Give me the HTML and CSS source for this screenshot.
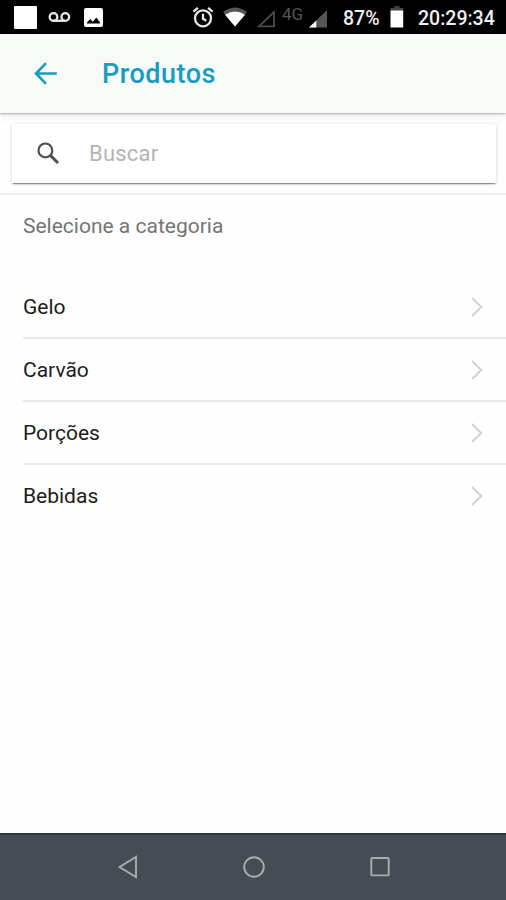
FILE: index.html
```html
<!DOCTYPE html>
<html lang="pt-BR">
<head>
  <meta charset="UTF-8">
  <meta name="viewport" content="width=device-width, initial-scale=1.0">
  <title>Produtos</title>
  <link rel="stylesheet" href="styles.css">
</head>
<body>
  <div class="status-bar">
    <div class="notifications">
      <div class="app-square"></div>
      <svg class="voicemail" width="23" height="11" viewBox="0 0 23 11" fill="none" stroke="#e8e8e8" stroke-width="2.3">
        <circle cx="5.5" cy="5" r="3.8"/>
        <circle cx="17.3" cy="5" r="3.8"/>
        <path d="M5.5 8.8H17.3"/>
      </svg>
      <svg class="picture" width="19" height="19" viewBox="0 0 19 19">
        <rect width="19" height="19" rx="2" fill="#fff"/>
        <path d="M3 15.5V14.5L6.3 11L8.7 13.8L12.4 9.5L16 14.5V15.5Z" fill="#000"/>
      </svg>
    </div>
    <div class="system">
      <svg class="alarm" width="22" height="22" viewBox="0 0 22 22" fill="none" stroke="#e8e8e8" stroke-width="2.3">
        <circle cx="11" cy="12.3" r="8"/>
        <path d="M1.4 5.6L5.9 1.8M20.6 5.6L16.1 1.8M11 7.8V12.8L14.3 14.8"/>
      </svg>
      <svg class="wifi" width="26" height="20" viewBox="0 0 26 20">
        <path d="M1 5Q13 -4 25 5L13 19.5Z" fill="#555"/>
        <path d="M3 7.8Q13 1 23 7.8L13 19.5Z" fill="#fff"/>
      </svg>
      <svg class="signal-empty" width="19" height="18" viewBox="0 0 19 18" fill="none" stroke="#4c4c4c" stroke-width="1.8">
        <path d="M2 16.3H17V2Z"/>
      </svg>
      <span class="network">4G</span>
      <svg class="signal" width="19" height="18" viewBox="0 0 19 18">
        <path d="M0 17.5L18 0V17.5Z" fill="#555"/>
        <path d="M0 17.5L7.3 10.5V17.5Z" fill="#fff"/>
      </svg>
      <span class="percent">87%</span>
      <svg class="battery" width="14" height="22" viewBox="0 0 14 22">
        <path d="M4.5 0H9.5V2H13.2V5H0.5V2H4.5Z" fill="#444"/>
        <path d="M0.5 4.5H13.2V21.5H0.5Z" fill="#fff"/>
      </svg>
      <span class="clock">20:29:34</span>
    </div>
  </div>

  <header class="header">
    <svg class="back" width="23" height="23" viewBox="0 0 23 23" fill="none" stroke="#199dbf" stroke-width="2.6">
      <path d="M22.8 11.5H2.5M12 1.2L2 11.5L12 21.8"/>
    </svg>
    <h1 class="title">Produtos</h1>
  </header>

  <main class="content">
    <div class="search-area">
      <div class="search">
        <svg width="23" height="23" viewBox="0 0 23 23" fill="none" stroke="#505050">
          <circle cx="8.4" cy="8.4" r="6.9" stroke-width="2.2"/>
          <path d="M13.4 13.4L21 21" stroke-width="2.9"/>
        </svg>
        <input class="search-input" type="text" placeholder="Buscar">
      </div>
    </div>

    <h2 class="subtitle">Selecione a categoria</h2>

    <ul class="categories">
      <li class="category">
        <span>Gelo</span>
        <svg width="13" height="20" viewBox="0 0 13 20"><path d="M2 1L11.3 10L2 19"/></svg>
      </li>
      <li class="category">
        <span>Carvão</span>
        <svg width="13" height="20" viewBox="0 0 13 20"><path d="M2 1L11.3 10L2 19"/></svg>
      </li>
      <li class="category">
        <span>Porções</span>
        <svg width="13" height="20" viewBox="0 0 13 20"><path d="M2 1L11.3 10L2 19"/></svg>
      </li>
      <li class="category">
        <span>Bebidas</span>
        <svg width="13" height="20" viewBox="0 0 13 20"><path d="M2 1L11.3 10L2 19"/></svg>
      </li>
    </ul>
  </main>

  <nav class="nav-bar">
    <svg width="22" height="24" viewBox="0 0 22 24"><path d="M19 2V22L2.5 12Z"/></svg>
    <svg width="22" height="24" viewBox="0 0 22 24"><circle cx="11" cy="12" r="9.8"/></svg>
    <svg width="22" height="24" viewBox="0 0 22 24"><rect x="2.3" y="3" width="17.4" height="17.4" rx="1"/></svg>
  </nav>
</body>
</html>
```
FILE: styles.css
```css
* {
  box-sizing: border-box;
}
body {
  margin: 0;
  height: 100vh;
  display: flex;
  flex-direction: column;
  background: #fefefe;
  color: #1c1c1c;
  font-family: Roboto, sans-serif;
  overflow: hidden;
}
svg {
  display: block;
  flex: none;
}
/* status bar */
.status-bar {
  height: 34px;
  flex: none;
  display: flex;
  justify-content: space-between;
  padding: 0 11px 0 14px;
  background: #000;
  color: #f0f0f0;
}
.notifications,
.system {
  display: flex;
  align-items: center;
}
.app-square {
  width: 23px;
  height: 23px;
  border-radius: 1px;
  background: #fff;
}
.voicemail {
  margin-left: 11px;
}
.picture {
  margin-left: 13px;
}
.alarm {
  margin-right: 8px;
}
.wifi {
  margin-right: 9px;
}
.signal-empty {
  margin: 4px 6px 0 0;
}
.network {
  width: 22px;
  margin: 0 5px 6px 0;
  color: #555;
  font-size: 17px;
  line-height: 18px;
}
.signal {
  margin: 4px 15px 0 0;
}
.percent,
.clock {
  margin-top: 3px;
  font-size: 19.5px;
  font-weight: 500;
  white-space: nowrap;
}
.percent {
  width: 38px;
  margin-right: 9px;
}
.battery {
  margin-right: 14px;
}
.clock {
  width: 77px;
}
/* header */
.header {
  position: relative;
  height: 79px;
  flex: none;
  display: flex;
  align-items: center;
  padding-left: 34px;
  background: #f7faf7;
  box-shadow: 0 1px 2px rgba(0, 0, 0, 0.3), 0 4px 10px rgba(0, 0, 0, 0.06);
}
.title {
  margin: 1px 0 0 45px;
  color: #199dbf;
  font-size: 27px;
  font-weight: 500;
  line-height: 32px;
  letter-spacing: 0.5px;
}
.content {
  flex: 1;
}
/* search */
.search-area {
  height: 82px;
  padding: 11px 10px 0 12px;
  border-bottom: 2px solid #eeeeee;
}
.search {
  height: 59px;
  display: flex;
  align-items: center;
  padding-left: 25px;
  background: #fff;
  box-shadow: 0 2px 1px -1px rgba(0, 0, 0, 0.36), 0 1px 3px rgba(0, 0, 0, 0.2);
}
.search-input {
  flex: 1;
  min-width: 0;
  margin-left: 29px;
  padding: 0;
  border: none;
  outline: none;
  background: none;
  font-family: inherit;
  font-size: 22px;
  letter-spacing: 0.2px;
}
.search-input::placeholder {
  color: #b4b4b4;
}
/* categories */
.subtitle {
  margin: 18px 0 36px 23px;
  color: #757575;
  font-size: 21px;
  font-weight: 400;
  line-height: 27px;
}
.categories {
  margin: 0;
  padding: 0 0 0 23px;
  list-style: none;
}
.category {
  height: 63px;
  display: flex;
  align-items: center;
  justify-content: space-between;
  padding-right: 23px;
  border-bottom: 2px solid #e9e9e9;
  font-size: 21px;
}
.category:last-child {
  border-bottom-color: transparent;
}
.category svg {
  fill: none;
  stroke: #d2d2d2;
  stroke-width: 2;
}
/* navigation buttons */
.nav-bar {
  height: 67px;
  flex: none;
  display: flex;
  align-items: center;
  justify-content: space-between;
  padding: 0 115px 2px 117px;
  border-top: 2px solid #30373c;
  background: #454c53;
}
.nav-bar svg {
  fill: none;
  stroke: #a7adb1;
  stroke-width: 1.9;
}
```
